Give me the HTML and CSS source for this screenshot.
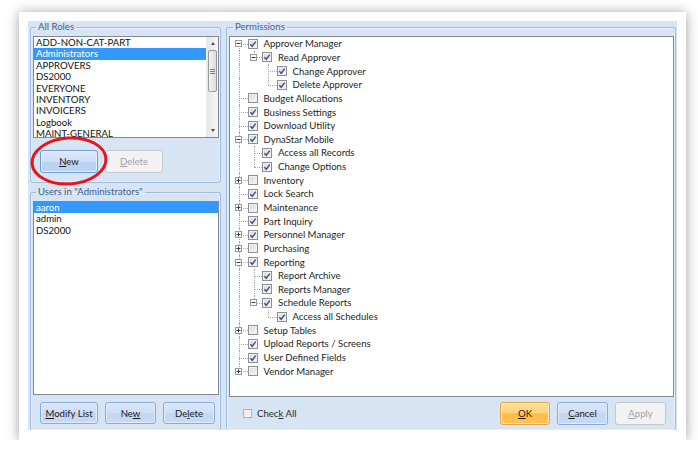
FILE: index.html
```html
<!DOCTYPE html>
<html lang="en">
<head>
    <meta charset="UTF-8">
    <title>Security Roles</title>
    <link rel="stylesheet" href="styles.css">
</head>
<body>
    <div class="frame">
        <div class="dialog">
            <div class="left-col">
                <fieldset class="group roles-group">
                    <legend>All Roles</legend>
                    <div class="listbox roles-list">
                        <div class="items">
                            <div class="item">ADD-NON-CAT-PART</div>
                            <div class="item selected">Administrators</div>
                            <div class="item">APPROVERS</div>
                            <div class="item">DS2000</div>
                            <div class="item">EVERYONE</div>
                            <div class="item">INVENTORY</div>
                            <div class="item">INVOICERS</div>
                            <div class="item">Logbook</div>
                            <div class="item">MAINT-GENERAL</div>
                        </div>
                        <div class="scrollbar">
                            <div class="arrow up"></div>
                            <div class="thumb"><span></span><span></span><span></span></div>
                            <div class="track"></div>
                            <div class="arrow down"></div>
                        </div>
                    </div>
                    <div class="button-row">
                        <button class="btn hot"><u>N</u>ew</button>
                        <button class="btn disabled"><u>D</u>elete</button>
                    </div>
                </fieldset>

                <fieldset class="group users-group">
                    <legend>Users in "Administrators"</legend>
                    <div class="listbox users-list">
                        <div class="items">
                            <div class="item selected">aaron</div>
                            <div class="item">admin</div>
                            <div class="item">DS2000</div>
                        </div>
                    </div>
                    <div class="button-row bottom">
                        <button class="btn blue modify"><u>M</u>odify List</button>
                        <button class="btn blue new">Ne<u>w</u></button>
                        <button class="btn blue del">De<u>l</u>ete</button>
                    </div>
                </fieldset>
            </div>

            <fieldset class="group perm-group">
                <legend>Permissions</legend>
                <div class="tree" id="tree"></div>
                <div class="perm-footer">
                    <label class="check-all"><span class="cb light"></span><span>Chec<u>k</u> All</span></label>
                    <div class="actions">
                        <button class="btn ok"><u>O</u>K</button>
                        <button class="btn blue cancel"><u>C</u>ancel</button>
                        <button class="btn disabled apply"><u>A</u>pply</button>
                    </div>
                </div>
            </fieldset>
        </div>

        <svg class="circle" width="84" height="56" viewBox="0 0 84 56">
            <ellipse cx="42" cy="28" rx="37" ry="23" fill="none" stroke="#e5151b" stroke-width="3" transform="rotate(-4 42 28)"/>
        </svg>
    </div>

    <script>
        // permissions tree: t = text, c = checked, k = expanded kids, p = collapsed
        const permissions = [
            { t: 'Approver Manager', c: 1, k: [
                { t: 'Read Approver', c: 1, k: [
                    { t: 'Change Approver', c: 1 },
                    { t: 'Delete Approver', c: 1 }
                ]}
            ]},
            { t: 'Budget Allocations', c: 0 },
            { t: 'Business Settings', c: 1 },
            { t: 'Download Utility', c: 1 },
            { t: 'DynaStar Mobile', c: 1, k: [
                { t: 'Access all Records', c: 1 },
                { t: 'Change Options', c: 1 }
            ]},
            { t: 'Inventory', c: 0, p: 1 },
            { t: 'Lock Search', c: 1 },
            { t: 'Maintenance', c: 0, p: 1 },
            { t: 'Part Inquiry', c: 1 },
            { t: 'Personnel Manager', c: 1, p: 1 },
            { t: 'Purchasing', c: 0, p: 1 },
            { t: 'Reporting', c: 1, k: [
                { t: 'Report Archive', c: 1 },
                { t: 'Reports Manager', c: 1 },
                { t: 'Schedule Reports', c: 1, k: [
                    { t: 'Access all Schedules', c: 1 }
                ]}
            ]},
            { t: 'Setup Tables', c: 0, p: 1 },
            { t: 'Upload Reports / Screens', c: 1 },
            { t: 'User Defined Fields', c: 1 },
            { t: 'Vendor Manager', c: 0, p: 1 }
        ];

        const treeEl = document.getElementById('tree');
        const check = '<svg width="8" height="8" viewBox="0 0 8 8"><path d="M1.3 4.1 L3.2 6.3 L6.8 1.6" fill="none" stroke="#3d5183" stroke-width="1.4"/></svg>';

        function expander(open) {
            const bar = open ? '' : '<path d="M3.5 1.5v4"/>';
            return '<svg class="exp" width="7" height="7" viewBox="0 0 7 7"><rect x="0.5" y="0.5" width="6" height="6" fill="#fbfbfb" stroke="#9a9a9a"/><g stroke="#3a3a3a"><path d="M1.5 3.5h4"/>' + bar + '</g></svg>';
        }

        function addNodes(nodes, guides) {
            nodes.forEach((node, i) => {
                const last = i === nodes.length - 1;
                const row = document.createElement('div');
                row.className = 'node';

                let html = guides.map(g => '<span class="cell ' + (g ? 'pass' : 'empty') + '"></span>').join('');
                let kind = last ? 'last' : 'tee';
                if (guides.length === 0 && i === 0) kind = 'first';
                html += '<span class="cell ' + kind + '">' + (node.k || node.p ? expander(!!node.k) : '') + '</span>';
                html += '<span class="cb">' + (node.c ? check : '') + '</span>';
                html += '<span class="label">' + node.t + '</span>';
                row.innerHTML = html;
                treeEl.appendChild(row);

                if (node.k) addNodes(node.k, guides.concat(!last));
            });
        }

        addNodes(permissions, []);
    </script>
</body>
</html>
```

FILE: styles.css
```css
body {
    margin: 0;
    background: #ffffff;
    font-family: Lato, "Open Sans", sans-serif;
    font-size: 9.6px;
    color: #1b1b1b;
}

.frame {
    position: relative;
    box-sizing: border-box;
    width: 667px;
    height: 428px;
    margin: 12px 0 0 19px;
    padding: 9px 9px 10px 9px;
    background: #ffffff;
    box-shadow: 0 1px 12px rgba(0, 0, 0, 0.38);
}

.dialog {
    display: flex;
    gap: 5px;
    height: 100%;
    padding: 0 1px 0 2px;
    background: #d6e4f4;
    overflow: hidden;
}

.left-col {
    width: 191px;
    display: flex;
    flex-direction: column;
    gap: 3px;
}

.group {
    margin: 0;
    padding: 0 1px 0 2px;
    min-width: 0;
    border: 1px solid #9fbbe0;
    border-radius: 3px;
    box-shadow: inset 0 0 0 1px #e6eef9;
}

.group legend {
    margin-left: 3px;
    padding: 0 2px;
    line-height: 12px;
    color: #3d5a8c;
}

.roles-group {
    padding-bottom: 9px;
}

.users-group,
.perm-group {
    flex: 1;
    border-bottom: none;
    display: flex;
    flex-direction: column;
}

.perm-group legend {
    color: #3b62a0;
    margin-left: 4px;
}

.listbox {
    margin-top: 3px;
    border: 1px solid #828790;
    background: #ffffff;
    display: flex;
    overflow: hidden;
}

.roles-list {
    height: 100px;
}

.users-list {
    height: 192px;
}

.items {
    flex: 1;
}

.item {
    height: 11.4px;
    line-height: 11.4px;
    padding-left: 2px;
    color: #111111;
    white-space: nowrap;
}

.item.selected {
    background: #3399ff;
    color: #ffffff;
}

.scrollbar {
    width: 11px;
    display: flex;
    flex-direction: column;
    background: linear-gradient(to right, #e6e6e6, #f6f6f6);
    border-left: 1px solid #eeeeee;
}

.arrow {
    height: 13px;
    display: flex;
    justify-content: center;
    align-items: center;
}

.arrow::before {
    content: '';
    border-left: 2.5px solid transparent;
    border-right: 2.5px solid transparent;
}

.arrow.up::before {
    border-bottom: 3px solid #4d4d4d;
}

.arrow.down::before {
    border-top: 3px solid #4d4d4d;
}

.thumb {
    height: 40px;
    margin: 0 1px;
    border: 1px solid #989898;
    border-radius: 2px;
    background: linear-gradient(to right, #f3f3f3, #dcdcdc);
    display: flex;
    flex-direction: column;
    justify-content: center;
    align-items: center;
    gap: 1px;
}

.thumb span {
    width: 5px;
    height: 1px;
    background: #7a7a7a;
}

.track {
    flex: 1;
}

.button-row {
    display: flex;
    gap: 7px;
    margin-top: 12px;
    padding-left: 7px;
}

.button-row.bottom {
    margin-top: 7px;
}

.btn {
    height: 23px;
    width: 58px;
    padding: 0;
    font: inherit;
    color: #1b1b1b;
    border: 1px solid #707070;
    border-radius: 3px;
    background: linear-gradient(#f2f2f2 0%, #ebebeb 50%, #dddddd 50%, #cfcfcf 100%);
}

.btn.hot {
    border-color: #6f9bd4;
    background: linear-gradient(#dfeafa 0%, #cddff7 50%, #b9d1f2 50%, #bdd4f3 100%);
    box-shadow: inset 0 0 0 1px #e8f0fb;
}

.btn.blue {
    border-color: #89a9d6;
    background: linear-gradient(#d9e6f8 0%, #cfdff6 50%, #c3d7f3 50%, #c6daf4 100%);
    box-shadow: inset 0 0 0 1px #e3ecf9;
}

.btn.disabled {
    color: #a3a3a3;
    border-color: #c4c8cc;
    background: #f2f2f2;
}

.button-row.bottom .btn {
    height: 22px;
}

.btn.new {
    width: 51px;
}

.btn.del {
    width: 52px;
}

.tree {
    height: 359px;
    margin-top: 3px;
    border: 1px solid #828790;
    background: #ffffff;
    padding-left: 2px;
    overflow: hidden;
}

.node {
    display: flex;
    align-items: center;
    height: 13.65px;
}

.cell {
    position: relative;
    flex: none;
    width: 14.5px;
    height: 100%;
    display: flex;
    align-items: center;
    justify-content: center;
}

.pass::before,
.tee::before,
.last::before,
.first::before {
    content: '';
    position: absolute;
    left: 7px;
    border-left: 1px dotted #a8a8a8;
}

.pass::before,
.tee::before {
    top: 0;
    bottom: 0;
}

.last::before {
    top: 0;
    height: 50%;
}

.first::before {
    top: 50%;
    bottom: 0;
}

.tee::after,
.last::after,
.first::after {
    content: '';
    position: absolute;
    left: 7px;
    right: -1px;
    top: 50%;
    border-top: 1px dotted #a8a8a8;
}

.exp {
    position: relative;
    z-index: 1;
    margin-left: -1px;
}

.cb {
    flex: none;
    box-sizing: border-box;
    width: 10px;
    height: 10px;
    margin-left: 1px;
    border: 1px solid #8e8f8f;
    background: linear-gradient(135deg, #d8d8d8, #f7f7f7);
    box-shadow: inset 0 0 0 1px #f1f1f1;
    display: flex;
    align-items: center;
    justify-content: center;
}

.cb.light {
    border-color: #b4b4b4;
    background: linear-gradient(135deg, #e6e6e6, #fafafa);
}

.label {
    margin-left: 6px;
    white-space: nowrap;
    color: #1e1e1e;
}

.perm-footer {
    display: flex;
    align-items: center;
    justify-content: space-between;
    margin-top: 5px;
    padding: 0 8px 0 14px;
}

.check-all {
    display: flex;
    align-items: center;
    gap: 5px;
    color: #2c2c2c;
}

.check-all .cb {
    width: 9px;
    height: 9px;
    margin: 0;
}

.actions {
    display: flex;
    gap: 7px;
}

.actions .btn {
    width: 51px;
}

.btn.ok {
    width: 50px;
    border-color: #e3a74a;
    background: linear-gradient(#ffdf9c 0%, #ffd27a 45%, #ffba45 55%, #ffc35a 100%);
    box-shadow: inset 0 0 0 1px #ffe9bf;
}

.circle {
    position: absolute;
    left: 8px;
    top: 121px;
}
```
